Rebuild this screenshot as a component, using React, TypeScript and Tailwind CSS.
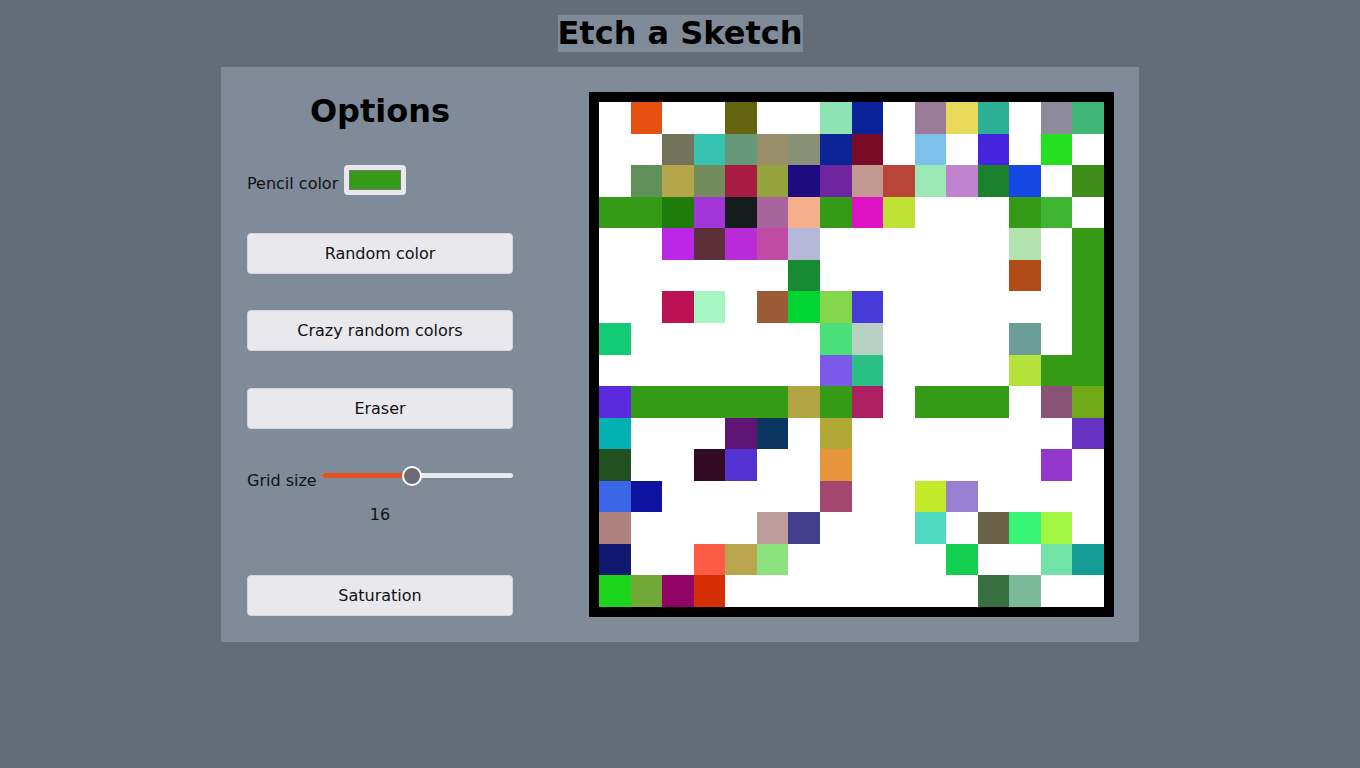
const W = "#ffffff";
const G = "#359a16";

// 16x16 painted cells, row by row
const cells: string[][] = [
  [W, "#e65010", W, W, "#64650f", W, W, "#8de3b3", "#0a239a", W, "#9a7b97", "#e9d95a", "#2baf95", W, "#8c8a9c", "#40b778"],
  [W, W, "#73735c", "#36c2b0", "#66987a", "#9a8f6b", "#889175", "#0c2496", "#780c26", W, "#7dc0ea", W, "#4425dd", W, "#24e020", W],
  [W, "#5f9059", "#b3a548", "#728c5d", "#a61c43", "#95a33f", "#1e0b80", "#6f25a0", "#c29990", "#b94538", "#9ce9b6", "#bf83cd", "#1b812d", "#1548e3", W, "#3e8c1a"],
  [G, G, "#1e7d08", "#a236d8", "#151c1c", "#a9639d", "#f3b08b", G, "#e013c4", "#bfe035", W, W, W, G, "#3fb533", W],
  [W, W, "#bb27e6", "#5c2f39", "#b92ad8", "#c04ba2", "#b5b8d7", W, W, W, W, W, W, "#b2e2ae", W, G],
  [W, W, W, W, W, W, "#178a33", W, W, W, W, W, W, "#b04a16", W, G],
  [W, W, "#bb1152", "#a6f5c3", W, "#9c5b37", "#02d432", "#84d64a", "#463ad9", W, W, W, W, W, W, G],
  ["#11cb76", W, W, W, W, W, W, "#4adf7a", "#b8cfc4", W, W, W, W, "#6a9e97", W, G],
  [W, W, W, W, W, W, W, "#7b5aea", "#28c084", W, W, W, W, "#b5e23a", G, G],
  ["#5a2ade", G, G, G, G, G, "#b3a445", G, "#ad1f63", W, G, G, G, W, "#8a5274", "#71a817"],
  ["#03b0b3", W, W, W, "#5e1574", "#0b3660", W, "#b2a836", W, W, W, W, W, W, W, "#6531c1"],
  ["#224f20", W, W, "#320b22", "#5233d2", W, W, "#e6953d", W, W, W, W, W, W, "#9236cc", W],
  ["#3a67e8", "#0f12a0", W, W, W, W, W, "#a4476f", W, W, "#c3ea28", "#977fd2", W, W, W, W],
  ["#ad827c", W, W, W, W, "#bc9b9a", "#423e8c", W, W, W, "#50d9c2", W, "#6a6246", "#37f574", "#a1f744", W],
  ["#11186f", W, W, "#fc5c44", "#bca54f", "#8be27e", W, W, W, W, W, "#14ce52", W, W, "#72e3a6", "#129c94"],
  ["#1ad51b", "#72a838", "#910367", "#d62e05", W, W, W, W, W, W, W, W, "#386f41", "#7ab99a", W, W],
];

const font = { fontFamily: '"DejaVu Sans", Verdana, sans-serif' };

function OptionButton({ label, className = "" }: { label: string; className?: string }) {
  return (
    <button
      className={`h-[41px] w-full rounded-[4px] border border-[#d6d5dc] bg-[#e9e8ed] text-[16px] leading-[normal] text-[#111] ${className}`}
    >
      {label}
    </button>
  );
}

// range input look-alike: thumb travels between the track ends minus its radius
function GridSlider({ value, min, max }: { value: number; min: number; max: number }) {
  const frac = (value - min) / (max - min);
  const center = `calc(10px + ${frac} * (100% - 20px))`;
  return (
    <div className="relative ml-[5px] h-[20px] flex-1">
      <div className="absolute left-0 right-0 top-[7px] h-[5px] rounded-full bg-[#e9e8ed]" />
      <div className="absolute left-0 top-[7px] h-[5px] rounded-full bg-[#e4531b]" style={{ width: center }} />
      <div
        className="absolute top-0 h-[20px] w-[20px] -translate-x-1/2 rounded-full border-2 border-white bg-[#6b6a76]"
        style={{ left: center }}
      />
    </div>
  );
}

export default function App() {
  return (
    <div className="min-h-screen bg-[#636d77] pt-[15px]" style={font}>
      <h1 className="mx-auto w-fit bg-[#7f8b98] text-[32px] font-bold leading-[37px] text-black">
        Etch a Sketch
      </h1>

      <main className="mx-auto mt-[15px] flex w-[918px] bg-[#7f8b98] py-[25px] pl-[26px] pr-[24px]">
        {/* options column */}
        <section className="flex w-[266px] flex-col">
          <h2 className="mt-px text-center text-[32px] font-bold leading-[37px] text-black">Options</h2>

          <div className="mt-[35px] flex h-[30px] items-center">
            <span className="mt-[6px] text-[16px] leading-[normal] text-[#111]">Pencil color</span>
            <div className="ml-[6px] h-[30px] w-[62px] rounded-[4px] bg-[#e9e8ed] p-[5px]">
              <div className="h-full w-full border border-[#777] bg-[#359a16]" />
            </div>
          </div>

          <OptionButton label="Random color" className="mt-[38px] h-[40px]" />
          <OptionButton label="Crazy random colors" className="mt-[36px]" />
          <OptionButton label="Eraser" className="mt-[37px]" />

          <div className="mt-[37px] flex h-[20px] items-center">
            <span className="mt-[8px] text-[16px] leading-[normal] text-[#111]">Grid size</span>
            <GridSlider value={16} min={2} max={32} />
          </div>
          <p className="mt-[19px] text-center text-[16px] leading-[normal] text-[#111]">16</p>

          <OptionButton label="Saturation" className="mt-[51px]" />
        </section>

        {/* sketch pad */}
        <div className="ml-[76px] border-[10px] border-black">
          <div className="grid h-[505px] w-[505px] grid-cols-16 grid-rows-16">
            {cells.flatMap((row, r) =>
              row.map((c, i) => <div key={`${r}-${i}`} style={{ background: c }} />)
            )}
          </div>
        </div>
      </main>
    </div>
  );
}
